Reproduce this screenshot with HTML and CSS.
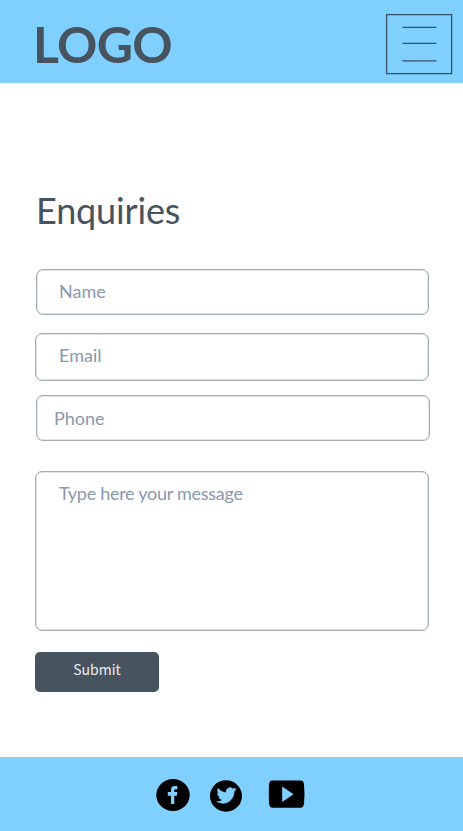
FILE: index.html
```html
<!DOCTYPE html>
<html lang="en">
<head>
<meta charset="utf-8">
<meta name="viewport" content="width=device-width, initial-scale=1">
<title>Enquiries</title>
<link rel="stylesheet" href="styles.css">
</head>
<body>
<header class="header">
  <div class="logo">LOGO</div>
  <button class="menu" type="button" aria-label="Menu">
    <svg width="68" height="62" viewBox="0 0 68 62" fill="none" stroke="#34516a" stroke-width="1.3">
      <rect x="1.6" y="1.6" width="65" height="59"/>
      <path d="M17.5 14.3h34M17.5 30.4h34M17.5 47.8h34"/>
    </svg>
  </button>
</header>
<main class="main">
  <h1 class="title">Enquiries</h1>
  <form class="form">
    <input class="field name" type="text" placeholder="Name">
    <input class="field email" type="email" placeholder="Email">
    <input class="field phone" type="tel" placeholder="Phone">
    <textarea class="field message" placeholder="Type here your message"></textarea>
    <button class="submit" type="button">Submit</button>
  </form>
</main>
<footer class="footer">
  <svg class="facebook" width="34" height="32" viewBox="0 0 34 32">
    <ellipse cx="17" cy="16" rx="16.7" ry="16"/>
    <path fill="#80d0ff" d="M15 25V16.700h-3.200V13H15v-2.300C15 8 16.600 7 19 7h2.300v3.200h-1.700c-1 0-1.300.4-1.300 1.300V13H21.300l-.5 3.700h-2.500V25z"/>
  </svg>
  <svg class="twitter" width="32" height="32" viewBox="0 0 32 32">
    <ellipse cx="16" cy="16" rx="16" ry="15.700"/>
    <path fill="#80d0ff" stroke="#80d0ff" stroke-width=".7" transform="translate(6.800 5.900) scale(.8)" d="M23.950 4.570a10 10 0 0 1-2.820.77 4.960 4.960 0 0 0 2.160-2.720c-.95.550-2 .95-3.130 1.180a4.920 4.920 0 0 0-8.380 4.480C7.690 8.090 4.070 6.130 1.640 3.160a4.820 4.820 0 0 0-.67 2.480c0 1.710.87 3.210 2.190 4.100a4.900 4.900 0 0 1-2.230-.62v.06a4.920 4.920 0 0 0 3.950 4.830 5 5 0 0 1-2.210.08 4.940 4.940 0 0 0 4.600 3.420A9.870 9.870 0 0 1 0 19.540a13.990 13.990 0 0 0 7.550 2.210c9.050 0 14-7.500 14-13.980 0-.21 0-.42-.02-.63a9.940 9.940 0 0 0 2.420-2.570z"/>
  </svg>
  <svg class="youtube" width="37" height="28" viewBox="0 0 37 28">
    <path d="M4 .4H33Q35.500.8 36 4 37 14 36 24 35.500 27.200 33 27.700H4Q1.500 27.200 1 24 .6 14 1 4 1.500.8 4 .4z"/>
    <path fill="#80d0ff" d="M14.200 6.500 25.500 14.200 14.200 22z"/>
  </svg>
</footer>
</body>
</html>
```

FILE: styles.css
```css
* {
  box-sizing: border-box;
}

body {
  margin: 0;
  min-height: 831px;
  display: flex;
  flex-direction: column;
  background: #fff;
  color: #485360;
  font-family: Lato, "Liberation Sans", sans-serif;
}

.header {
  height: 83px;
  padding: 13px 10px 0 33px;
  display: flex;
  justify-content: space-between;
  align-items: flex-start;
  background: #80d0ff;
}

.logo {
  font-size: 50px;
  font-weight: 700;
  line-height: 62px;
  letter-spacing: -0.7px;
}

.menu {
  padding: 0;
  border: 0;
  background: none;
}

.menu svg {
  display: block;
}

.main {
  flex: 1;
  padding: 105px 33px 0 35px;
}

.title {
  margin: 0 0 0 1px;
  font-size: 36px;
  font-weight: 400;
  line-height: 44px;
  letter-spacing: -0.15px;
}

.form {
  display: flex;
  flex-direction: column;
  align-items: flex-start;
  margin-top: 37px;
}

.field {
  display: block;
  width: 394px;
  margin: 0;
  padding: 0 23px;
  border: 1px solid #a3adba;
  border-radius: 7px;
  outline: 0;
  background: #fff;
  box-shadow: inset 0 0 0 0.5px #c3cad3;
  font: 18px/24px Lato, "Liberation Sans", sans-serif;
  resize: none;
}

.field::placeholder {
  color: #8a98ad;
  opacity: 1;
}

.name {
  width: 393px;
  height: 46px;
  margin-left: 1px;
  padding: 0 22px 2px;
}

.email {
  height: 48px;
  margin-top: 18px;
  padding-bottom: 4px;
}

.phone {
  height: 46px;
  margin: 14px 0 0 1px;
  padding: 0 17px 1px;
}

.message {
  height: 160px;
  margin-top: 30px;
  padding-top: 9px;
  letter-spacing: -0.27px;
}

.submit {
  width: 124px;
  height: 40px;
  margin-top: 21px;
  padding: 0 0 6px;
  border: 0;
  border-radius: 5px;
  background: #485360;
  color: #e9edf3;
  font: 14px/22px "Noto Sans CJK SC", "Noto Sans", sans-serif;
}

.footer {
  height: 74px;
  padding: 22px 0 0 156px;
  display: flex;
  align-items: flex-start;
  background: #80d0ff;
}

.twitter {
  margin: 1px 0 0 20px;
}

.youtube {
  margin: 1px 0 0 26px;
}
```
